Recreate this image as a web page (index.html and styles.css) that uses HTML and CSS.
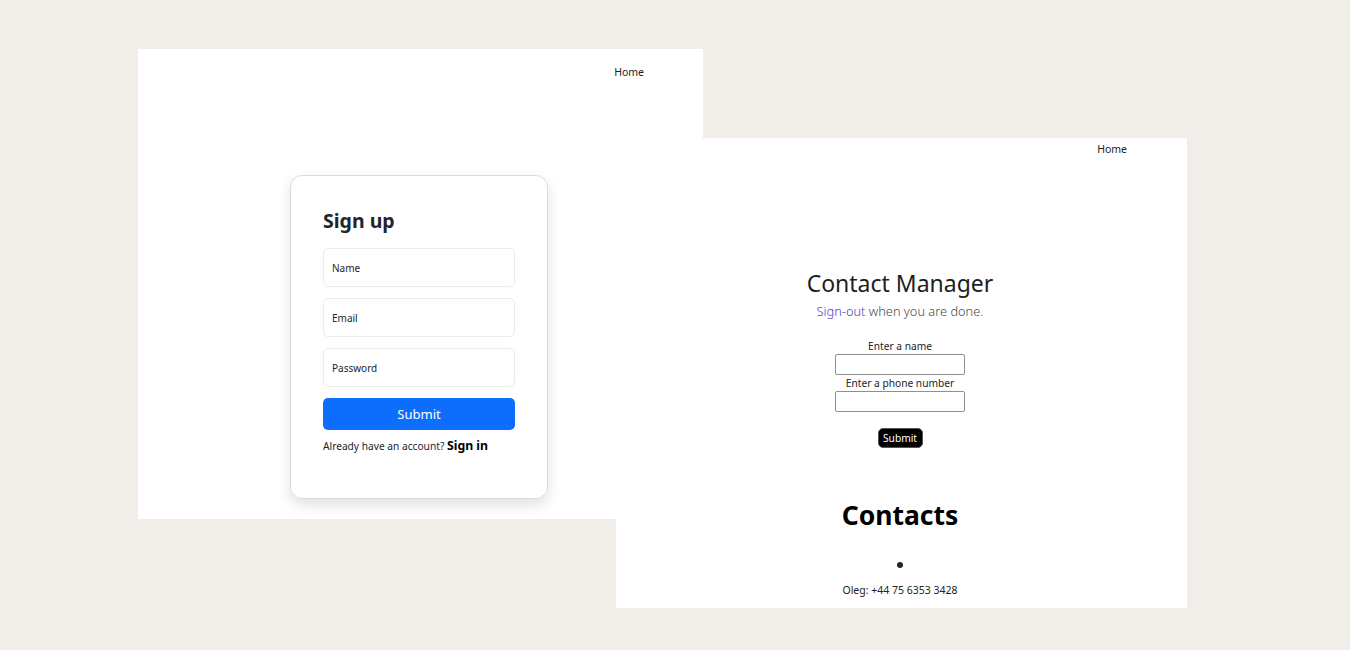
FILE: index.html
```html
<!DOCTYPE html>
<html>
<head>
<meta charset="utf-8">
<link rel="stylesheet" href="styles.css">
</head>
<body>
<div class="desk">
  <div class="win win-right">
    <nav class="nav nav-right"><a class="nav-link">Home</a></nav>
    <main class="cm">
      <h1 class="cm-title">Contact Manager</h1>
      <p class="cm-sub"><a class="cm-link">Sign-out</a> when you are done.</p>
      <form class="cm-form">
        <label class="cm-label">Enter a name</label>
        <input class="cm-input" type="text">
        <label class="cm-label">Enter a phone number</label>
        <input class="cm-input" type="text">
        <button class="cm-btn" type="button">Submit</button>
      </form>
      <h2 class="cm-h2">Contacts</h2>
      <ul class="cm-list">
        <li class="cm-item"></li>
      </ul>
      <p class="cm-entry">Oleg: +44 75 6353 3428</p>
    </main>
  </div>
  <div class="win win-left">
    <nav class="nav nav-left"><a class="nav-link">Home</a></nav>
    <div class="card">
      <h2 class="card-title">Sign up</h2>
      <div class="field">Name</div>
      <div class="field">Email</div>
      <div class="field">Password</div>
      <button class="btn-primary" type="button">Submit</button>
      <p class="card-foot">Already have an account? <b class="card-signin">Sign in</b></p>
    </div>
  </div>
</div>
</body>
</html>
```
FILE: styles.css
```css
* { box-sizing: border-box; }
html, body { margin: 0; padding: 0; }
body {
  background: #f1eee9;
  font-family: "Noto Sans", "Open Sans", sans-serif;
  color: #212529;
  width: 1350px;
  height: 650px;
  overflow: hidden;
}
.desk { position: relative; width: 1350px; height: 650px; }
.win { position: absolute; background: #fff; }
.win-left { left: 138px; top: 49px; width: 565px; height: 470px; display: flex; flex-direction: column; align-items: center; }
.win-right { left: 616px; top: 138px; width: 571px; height: 470px; display: flex; flex-direction: column; }
.nav { display: flex; justify-content: flex-end; }
.nav-left { align-self: stretch; padding: 16px 59px 0 0; height: 126px; }
.nav-right { padding: 4px 60px 0 0; }
.nav-link { font-size: 10.5px; line-height: 14px; color: #222; }

.card {
  width: 258px;
  height: 324px;
  margin-right: 3px;
  border: 1px solid #dcdcdc;
  border-radius: 12px;
  box-shadow: 0 6px 14px rgba(0,0,0,0.12);
  padding: 30px 32px 0 32px;
  display: flex;
  flex-direction: column;
  gap: 11px;
}
.card-title { margin: 0 0 1px 0; font-size: 19.5px; line-height: 30px; font-weight: 700; color: #212529; }
.field {
  height: 39px;
  border: 1px solid #ececec;
  border-radius: 5px;
  padding: 0 8px;
  font-size: 10px;
  display: flex;
  align-items: center;
  color: #212529;
}
.btn-primary {
  height: 32px;
  border: none;
  border-radius: 5px;
  background: #0d6efd;
  color: #fff;
  font-family: inherit;
  font-size: 13px;
  padding: 0;
}
.card-foot { margin: -3px 0 0; font-size: 10.2px; line-height: 16px; color: #212529; }
.card-signin { font-size: 12.3px; font-weight: 700; color: #000; }

.cm { display: flex; flex-direction: column; align-items: center; margin-top: 113px; padding-right: 3px; }
.cm-title { margin: 0; font-size: 23px; line-height: 28px; font-weight: 400; color: #1e1e1e; }
.cm-sub { margin: 4px 0 0; font-size: 12.8px; line-height: 20px; font-weight: 300; color: #4a4a4a; }
.cm-link { color: #4a40c0; }
.cm-form { display: flex; flex-direction: column; align-items: center; margin-top: 18px; }
.cm-label { font-size: 10.2px; line-height: 14px; color: #212529; }
.cm-input { width: 130px; height: 21px; border: 1px solid #8f8f8f; border-radius: 2px; margin: 1px 0 1px; }
.cm-btn {
  margin-top: 15px;
  width: 45px;
  height: 20px;
  background: #000;
  color: #fff;
  border: 1px solid #555;
  border-radius: 5px;
  font-family: inherit;
  font-size: 10.2px;
  padding: 0;
}
.cm-h2 { margin: 48px 0 0; font-size: 26.5px; line-height: 38px; font-weight: 700; color: #000; }
.cm-list { margin: 21px 0 0; padding: 0; list-style: disc inside; height: 18px; }
.cm-item { font-size: 16px; line-height: 18px; width: 12px; margin-left: 6px; }
.cm-entry { margin: 10px 0 0; font-size: 10.5px; line-height: 14px; color: #212529; }
```
